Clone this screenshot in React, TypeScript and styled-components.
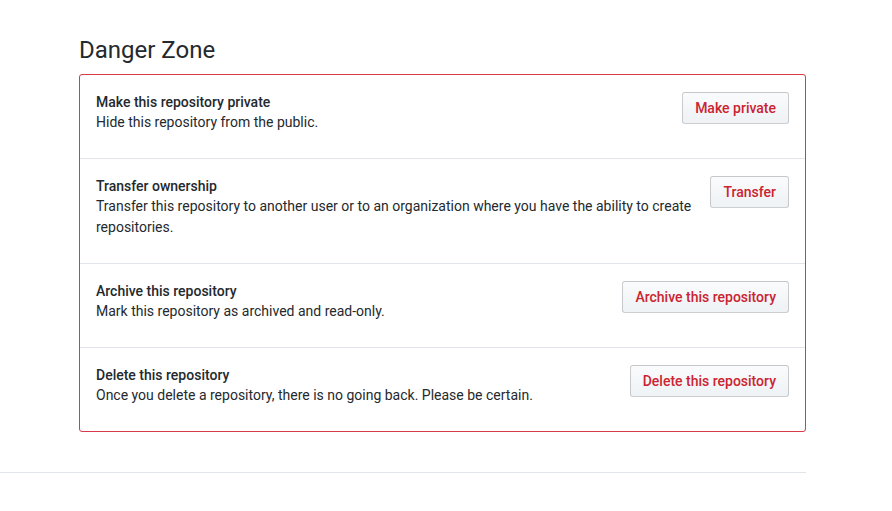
import styled, { createGlobalStyle } from 'styled-components'

const GlobalStyle = createGlobalStyle`
  body {
    margin: 0;
    background: #fff;
    font-family: Roboto, "Liberation Sans", Arial, sans-serif;
    font-size: 14px;
    line-height: 1.5;
    color: #24292e;
  }
`

const Page = styled.div`
  width: 806px;
  padding-top: 32px;
`

const Column = styled.div`
  margin-left: 79px;
  width: 727px;
`

const Heading = styled.h2`
  margin: 0 0 6px;
  font-size: 24px;
  font-weight: 400;
  line-height: 36px;
  color: #24292e;
`

const DangerBox = styled.ul`
  list-style: none;
  margin: 0;
  padding: 0;
  border: 1px solid #d73a49;
  border-radius: 3px;
`

const Row = styled.li`
  display: flex;
  align-items: flex-start;
  gap: 10px;
  padding: 16px;

  & + & {
    border-top: 1px solid #e1e4e8;
  }
`

const Info = styled.div`
  flex: 1 1 auto;
`

const Title = styled.strong`
  display: block;
  font-weight: 500;
  line-height: 20px;
  margin-top: 1px;
`

const Description = styled.p`
  margin: 0 0 9px;
`

const DangerButton = styled.button`
  flex: none;
  margin-top: 1px;
  padding: 5px 12px;
  font-family: inherit;
  font-size: 14px;
  font-weight: 500;
  line-height: 20px;
  color: #cb2431;
  background: linear-gradient(-180deg, #fafbfc 0%, #eff3f6 90%);
  border: 1px solid rgba(27, 31, 35, 0.2);
  border-radius: 3px;
  white-space: nowrap;
  cursor: pointer;
`

const Divider = styled.hr`
  margin: 40px 0 0;
  border: 0;
  border-top: 1px solid #e1e4e8;
`

const actions = [
  {
    title: 'Make this repository private',
    text: 'Hide this repository from the public.',
    button: 'Make private',
  },
  {
    title: 'Transfer ownership',
    text: 'Transfer this repository to another user or to an organization where you have the ability to create repositories.',
    button: 'Transfer',
  },
  {
    title: 'Archive this repository',
    text: 'Mark this repository as archived and read-only.',
    button: 'Archive this repository',
  },
  {
    title: 'Delete this repository',
    text: 'Once you delete a repository, there is no going back. Please be certain.',
    button: 'Delete this repository',
  },
]

export default function App() {
  return (
    <>
      <GlobalStyle />
      <Page>
        <Column>
          <Heading>Danger Zone</Heading>
          <DangerBox>
            {actions.map((a) => (
              <Row key={a.title}>
                <Info>
                  <Title>{a.title}</Title>
                  <Description>{a.text}</Description>
                </Info>
                <DangerButton>{a.button}</DangerButton>
              </Row>
            ))}
          </DangerBox>
        </Column>
        <Divider />
      </Page>
    </>
  )
}
